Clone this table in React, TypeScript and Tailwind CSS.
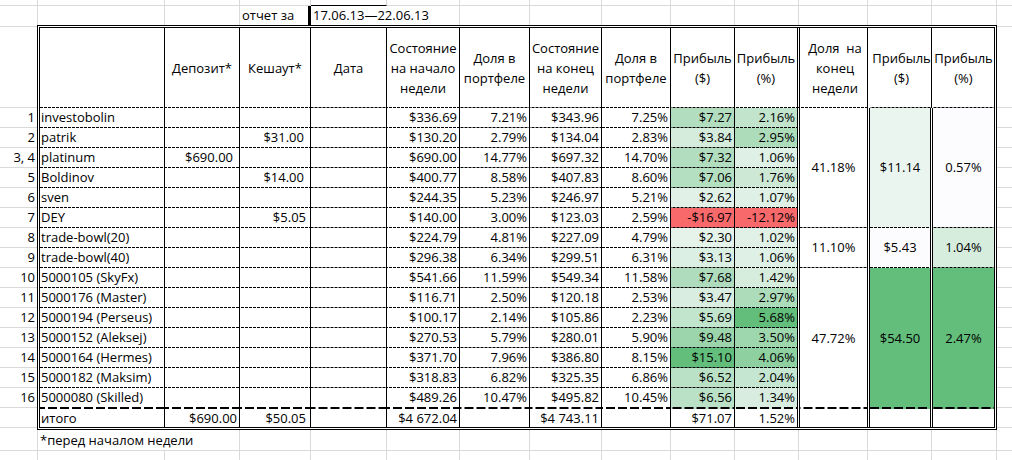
import React from "react";

const DASH =
  "bg-[linear-gradient(90deg,#000_3px,transparent_3px)] bg-[length:4px_1px] bg-bottom bg-repeat-x";
const THICK =
  "bg-[linear-gradient(90deg,#000_9px,transparent_9px)] bg-[length:12px_2px] bg-bottom bg-repeat-x";

type Row = {
  i: string;
  name: string;
  dep: string;
  cash: string;
  cashPr?: boolean;
  s1: string;
  d1: string;
  s2: string;
  d2: string;
  p: string;
  pp: string;
  pv: number;
  ppv: number;
};

const rows: Row[] = [
  { i: "1", name: "investobolin", dep: "", cash: "", s1: "$336.69", d1: "7.21%", s2: "$343.96", d2: "7.25%", p: "$7.27", pp: "2.16%", pv: 7.27, ppv: 2.16 },
  { i: "2", name: "patrik", dep: "", cash: "$31.00", cashPr: true, s1: "$130.20", d1: "2.79%", s2: "$134.04", d2: "2.83%", p: "$3.84", pp: "2.95%", pv: 3.84, ppv: 2.95 },
  { i: "3, 4", name: "platinum", dep: "$690.00", cash: "", s1: "$690.00", d1: "14.77%", s2: "$697.32", d2: "14.70%", p: "$7.32", pp: "1.06%", pv: 7.32, ppv: 1.06 },
  { i: "5", name: "Boldinov", dep: "", cash: "$14.00", cashPr: true, s1: "$400.77", d1: "8.58%", s2: "$407.83", d2: "8.60%", p: "$7.06", pp: "1.76%", pv: 7.06, ppv: 1.76 },
  { i: "6", name: "sven", dep: "", cash: "", s1: "$244.35", d1: "5.23%", s2: "$246.97", d2: "5.21%", p: "$2.62", pp: "1.07%", pv: 2.62, ppv: 1.07 },
  { i: "7", name: "DEY", dep: "", cash: "$5.05", s1: "$140.00", d1: "3.00%", s2: "$123.03", d2: "2.59%", p: "-$16.97", pp: "-12.12%", pv: -16.97, ppv: -12.12 },
  { i: "8", name: "trade-bowl(20)", dep: "", cash: "", s1: "$224.79", d1: "4.81%", s2: "$227.09", d2: "4.79%", p: "$2.30", pp: "1.02%", pv: 2.3, ppv: 1.02 },
  { i: "9", name: "trade-bowl(40)", dep: "", cash: "", s1: "$296.38", d1: "6.34%", s2: "$299.51", d2: "6.31%", p: "$3.13", pp: "1.06%", pv: 3.13, ppv: 1.06 },
  { i: "10", name: "5000105 (SkyFx)", dep: "", cash: "", s1: "$541.66", d1: "11.59%", s2: "$549.34", d2: "11.58%", p: "$7.68", pp: "1.42%", pv: 7.68, ppv: 1.42 },
  { i: "11", name: "5000176 (Master)", dep: "", cash: "", s1: "$116.71", d1: "2.50%", s2: "$120.18", d2: "2.53%", p: "$3.47", pp: "2.97%", pv: 3.47, ppv: 2.97 },
  { i: "12", name: "5000194 (Perseus)", dep: "", cash: "", s1: "$100.17", d1: "2.14%", s2: "$105.86", d2: "2.23%", p: "$5.69", pp: "5.68%", pv: 5.69, ppv: 5.68 },
  { i: "13", name: "5000152 (Aleksej)", dep: "", cash: "", s1: "$270.53", d1: "5.79%", s2: "$280.01", d2: "5.90%", p: "$9.48", pp: "3.50%", pv: 9.48, ppv: 3.5 },
  { i: "14", name: "5000164 (Hermes)", dep: "", cash: "", s1: "$371.70", d1: "7.96%", s2: "$386.80", d2: "8.15%", p: "$15.10", pp: "4.06%", pv: 15.1, ppv: 4.06 },
  { i: "15", name: "5000182 (Maksim)", dep: "", cash: "", s1: "$318.83", d1: "6.82%", s2: "$325.35", d2: "6.86%", p: "$6.52", pp: "2.04%", pv: 6.52, ppv: 2.04 },
  { i: "16", name: "5000080 (Skilled)", dep: "", cash: "", s1: "$489.26", d1: "10.47%", s2: "$495.82", d2: "10.45%", p: "$6.56", pp: "1.34%", pv: 6.56, ppv: 1.34 },
];

function scale(v: number, min: number, max: number): string {
  if (v < 0) return "#f8696b";
  const t = Math.max(0, Math.min(1, (v - min) / (max - min)));
  const r = Math.round(252 + (99 - 252) * t);
  const g = Math.round(252 + (190 - 252) * t);
  const b = Math.round(255 + (123 - 255) * t);
  return `rgb(${r},${g},${b})`;
}

const headers: { t: string; c: string }[] = [
  { t: "", c: "border-r border-black" },
  { t: "Депозит*", c: "border-r border-black" },
  { t: "Кешаут*", c: "border-r border-black" },
  { t: "Дата", c: "border-r border-black" },
  { t: "Состояние\nна начало\nнедели", c: "border-r border-black" },
  { t: "Доля в\nпортфеле", c: "border-r border-black" },
  { t: "Состояние\nна конец\nнедели", c: "border-r border-black" },
  { t: "Доля в\nпортфеле", c: "border-r border-black" },
  { t: "Прибыль\n($)", c: "border-r border-black" },
  { t: "Прибыль\n(%)", c: "border-r-[3px] border-double border-black" },
  { t: "Доля\u00a0 на\nконец\nнедели", c: "shadow-[inset_-2px_0_0_#fff,inset_-3px_0_0_#000]" },
  { t: "Прибыль\n($)", c: "shadow-[inset_-1px_0_0_#fff,inset_-2px_0_0_#000]" },
  { t: "Прибыль\n(%)", c: "" },
];

const groups = [
  { pos: "row-start-2 row-span-6", a: "41.18%", b: "$11.14", c: "0.57%", bv: 11.14, cv: 0.57, last: false },
  { pos: "row-start-8 row-span-2", a: "11.10%", b: "$5.43", c: "1.04%", bv: 5.43, cv: 1.04, last: false },
  { pos: "row-start-10 row-span-7", a: "47.72%", b: "$54.50", c: "2.47%", bv: 54.5, cv: 2.47, last: true },
];

function TopCells({ h }: { h: string }) {
  const widths = [
    "w-[73px]",
    "w-[70px]",
    "w-[72px]",
    "w-[69px]",
    "w-[64px]",
    "w-[64px]",
    "w-[69px]",
    "w-[64px]",
    "w-[65px]",
  ];
  return (
    <>
      {widths.map((w, k) => (
        <div key={k} className={`${w} ${h} shrink-0 border-r border-[#d9d9d9]`} />
      ))}
      <div className={`flex-1 ${h}`} />
    </>
  );
}

function SideColumn({ numbers }: { numbers: boolean }) {
  return (
    <div className="flex flex-col">
      <div className="h-[83px] pt-[1px]">
        <div className="h-full border-y border-[#d9d9d9]" />
      </div>
      {rows.map((r) => (
        <div
          key={r.i}
          className="h-[20px] border-b border-[#d9d9d9] text-right pr-[2px] leading-[19px] whitespace-nowrap"
        >
          {numbers ? r.i : ""}
        </div>
      ))}
      <div className="h-[20px] border-b border-[#d9d9d9]" />
    </div>
  );
}

export default function App() {
  const cellBase = "whitespace-nowrap leading-[19px]";
  return (
    <div className="w-[1012px] h-[460px] overflow-hidden bg-white text-black font-['Open_Sans',sans-serif] text-[13px]">
      {/* Row A */}
      <div className="flex h-[6px] border-b border-[#d9d9d9]">
        <div className="w-[38px] shrink-0 border-r border-[#d9d9d9]" />
        <div className="w-[127px] shrink-0 border-r border-[#d9d9d9]" />
        <div className="w-[75px] shrink-0 border-r border-[#d9d9d9]" />
        <div className="w-[71px] shrink-0 border-r border-[#d9d9d9]" />
        <div className="w-[76px] shrink-0 border-r border-[#d9d9d9] -mb-[1px] border-b border-b-black" />
        <TopCells h="h-[5px]" />
      </div>
      {/* Row B */}
      <div className="flex h-[19px]">
        <div className="w-[38px] shrink-0 border-r border-[#d9d9d9]" />
        <div className="w-[127px] shrink-0 border-r border-[#d9d9d9]" />
        <div className="w-[75px] shrink-0 border-r border-[#d9d9d9]" />
        <div className="w-[68px] shrink-0 pl-[2px] leading-[19px] whitespace-nowrap">отчет за</div>
        <div className="w-[79px] shrink-0 border-l-[3px] border-black pl-[2px] leading-[19px] whitespace-nowrap overflow-visible relative z-10">
          17.06.13—22.06.13
        </div>
        <div className="w-[73px] shrink-0" />
        <div className="w-[70px] shrink-0 border-l border-[#d9d9d9] -ml-[1px]" />
        <div className="w-[72px] shrink-0 border-l border-[#d9d9d9]" />
        <div className="w-[69px] shrink-0 border-l border-[#d9d9d9]" />
        <div className="w-[64px] shrink-0 border-l border-[#d9d9d9]" />
        <div className="w-[64px] shrink-0 border-l border-[#d9d9d9]" />
        <div className="w-[69px] shrink-0 border-l border-[#d9d9d9]" />
        <div className="w-[64px] shrink-0 border-l border-[#d9d9d9]" />
        <div className="w-[65px] shrink-0 border-l border-[#d9d9d9]" />
        <div className="flex-1 border-l border-[#d9d9d9]" />
      </div>

      {/* Middle: index column, table, right strip */}
      <div className="flex h-[405px]">
        <div className="w-[37px] shrink-0">
          <SideColumn numbers />
        </div>
        <div className="w-[960px] shrink-0 grid border-[3px] border-double border-black grid-cols-[125px_75px_71px_76px_73px_70px_72px_69px_64px_65px_70px_63px_61px] grid-rows-[80px_repeat(14,20px)_21px_18px]">
          {headers.map((h, k) => (
            <div
              key={`h${k}`}
              className={`flex items-center justify-center text-center whitespace-pre-line leading-[20px] pb-[1px] ${DASH} ${h.c}`}
            >
              {h.t}
            </div>
          ))}

          {groups.map((g, k) => (
            <React.Fragment key={`g${k}`}>
              <div
                className={`col-start-11 ${g.pos} flex items-center justify-center border-r-[3px] border-double border-black bg-clip-padding ${g.last ? THICK : DASH}`}
              >
                {g.a}
              </div>
              <div
                className={`col-start-12 ${g.pos} flex items-center justify-center border-r-[3px] border-double border-black bg-clip-padding ${g.last ? THICK : DASH}`}
                style={{ backgroundColor: scale(g.bv, 5.43, 54.5) }}
              >
                {g.b}
              </div>
              <div
                className={`col-start-13 ${g.pos} flex items-center justify-center ${g.last ? THICK : DASH}`}
                style={{ backgroundColor: scale(g.cv, 0.57, 2.47) }}
              >
                {g.c}
              </div>
            </React.Fragment>
          ))}

          {rows.map((r, k) => {
            const line = k === rows.length - 1 ? THICK : DASH;
            const right = `${cellBase} ${line} border-r border-black text-right pr-[2px]`;
            return (
              <React.Fragment key={`r${k}`}>
                <div className={`${cellBase} ${line} border-r border-black pl-[1px]`}>{r.name}</div>
                <div className={`${cellBase} ${line} border-r border-black text-right pr-[6px]`}>{r.dep}</div>
                <div className={`${cellBase} ${line} border-r border-black text-right ${r.cashPr ? "pr-[6px]" : "pr-[4px]"}`}>
                  {r.cash}
                </div>
                <div className={right} />
                <div className={right}>{r.s1}</div>
                <div className={right}>{r.d1}</div>
                <div className={right}>{r.s2}</div>
                <div className={right}>{r.d2}</div>
                <div className={`${right} bg-clip-padding`} style={{ backgroundColor: scale(r.pv, 0, 15.1) }}>
                  {r.p}
                </div>
                <div
                  className={`${cellBase} ${line} border-r-[3px] border-double border-black bg-clip-padding text-right pr-[2px]`}
                  style={{ backgroundColor: scale(r.ppv, 0, 5.68) }}
                >
                  {r.pp}
                </div>
              </React.Fragment>
            );
          })}

          {/* Total row */}
          <div className="leading-[18px] whitespace-nowrap border-r border-black pl-[1px]">итого</div>
          <div className="leading-[18px] whitespace-nowrap border-r border-black text-right pr-[2px]">$690.00</div>
          <div className="leading-[18px] whitespace-nowrap border-r border-black text-right pr-[4px]">$50.05</div>
          <div className="border-r border-black" />
          <div className="leading-[18px] whitespace-nowrap border-r border-black text-right pr-[2px]">$4 672.04</div>
          <div className="border-r border-black" />
          <div className="leading-[18px] whitespace-nowrap border-r border-black text-right pr-[2px]">$4 743.11</div>
          <div className="border-r border-black" />
          <div className="leading-[18px] whitespace-nowrap border-r border-black text-right pr-[2px]">$71.07</div>
          <div className="leading-[18px] whitespace-nowrap border-r-[3px] border-double border-black text-right pr-[2px]">1.52%</div>
          <div className="border-r-[3px] border-double border-black" />
          <div className="border-r-[3px] border-double border-black" />
          <div />
        </div>
        <div className="flex-1">
          <SideColumn numbers={false} />
        </div>
      </div>

      {/* Footer row */}
      <div className="flex h-[21px] border-b border-[#d9d9d9]">
        <div className="w-[38px] shrink-0 border-r border-[#d9d9d9]" />
        <div className="w-[202px] shrink-0 border-r border-[#d9d9d9] pl-[2px] leading-[20px] whitespace-nowrap">
          *перед началом недели
        </div>
        <div className="w-[71px] shrink-0 border-r border-[#d9d9d9]" />
        <div className="w-[76px] shrink-0 border-r border-[#d9d9d9]" />
        <TopCells h="h-[20px]" />
      </div>
      <div className="flex h-[10px]">
        <div className="w-[38px] shrink-0 border-r border-[#d9d9d9]" />
        <div className="w-[127px] shrink-0 border-r border-[#d9d9d9]" />
        <div className="w-[75px] shrink-0 border-r border-[#d9d9d9]" />
        <div className="w-[71px] shrink-0 border-r border-[#d9d9d9]" />
        <div className="w-[76px] shrink-0 border-r border-[#d9d9d9]" />
        <TopCells h="h-[10px]" />
      </div>
    </div>
  );
}
